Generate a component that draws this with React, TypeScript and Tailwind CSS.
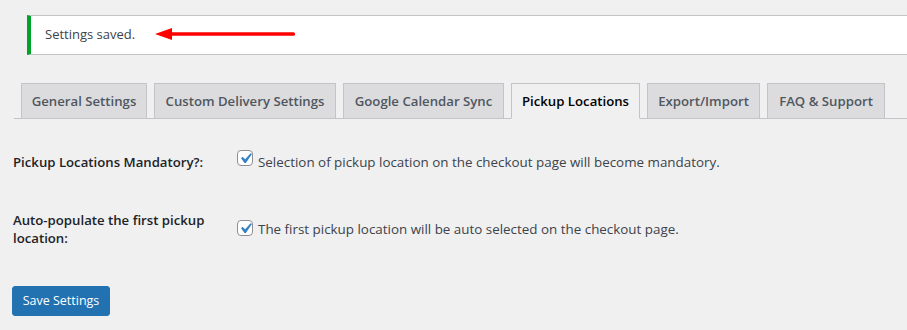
import React from 'react';

const tabs = [
  { label: 'General Settings', width: 'w-[126px]' },
  { label: 'Custom Delivery Settings', width: 'w-[182px]' },
  { label: 'Google Calendar Sync', width: 'w-[161px]' },
  { label: 'Pickup Locations', width: 'w-[129px]', active: true },
  { label: 'Export/Import', width: 'w-[113px]' },
  { label: 'FAQ & Support', width: 'w-[118px]' },
];

function Checkbox() {
  return (
    <span className="flex h-4 w-4 shrink-0 items-center justify-center rounded-[4px] border border-[#8c8f94] bg-white">
      <svg viewBox="0 0 20 20" className="h-[21px] w-[21px] shrink-0">
        <path fill="#3582c4" d="M14.83 4.89l1.34.94-5.81 8.38H9.02L5.78 9.67l1.34-1.25 2.57 2.4z" />
      </svg>
    </span>
  );
}

export default function App() {
  return (
    <div className="h-[330px] w-[907px] overflow-hidden bg-[#f0f0f1] pt-[15px] font-['Open_Sans',sans-serif] text-[#3c434a]">
      {/* notice */}
      <div className="ml-[27px] flex h-[40px] w-[900px] items-center border-y border-l-4 border-[#c3c4c7] border-l-[#00a32a] bg-white pl-[14px]">
        <p className="text-[13px]">Settings saved.</p>
        <svg width="141" height="14" viewBox="0 0 141 14" className="ml-[20px] -mt-[3px]">
          <polygon points="0,7 17,1 17,13" fill="#ff0000" />
          <rect x="14" y="5.3" width="126" height="3.4" rx="1.5" fill="#ff0000" />
        </svg>
      </div>

      {/* tabs */}
      <div className="mt-[28px] ml-[14px] flex gap-[7px] border-b border-[#c3c4c7] pl-[7px]">
        {tabs.map((t) => (
          <div
            key={t.label}
            className={`-mb-px flex h-[36px] items-center justify-center border border-[#c3c4c7] pt-px text-[13.2px] font-semibold ${t.width} ${
              t.active ? 'border-b-[#f0f0f1] bg-[#f0f0f1] text-black' : 'bg-[#dcdcde] text-[#50575e]'
            }`}
          >
            {t.label}
          </div>
        ))}
      </div>

      {/* form */}
      <div className="ml-[13px] text-[13.4px]">
        <div className="mt-[33px] flex items-start">
          <div className="w-[224px] text-[13.2px] font-semibold leading-[20px] text-[#1d2327]">Pickup Locations Mandatory?:</div>
          <div className="flex items-start">
            <span className="-mt-[2px]"><Checkbox /></span>
            <span className="ml-[5px] leading-[20px]">Selection of pickup location on the checkout page will become mandatory.</span>
          </div>
        </div>

        <div className="mt-[39px] flex items-center">
          <div className="w-[224px] pr-[20px] text-[13.2px] font-semibold leading-[18px] text-[#1d2327]">
            Auto-populate the first pickup location:
          </div>
          <div className="flex items-center">
            <span className="-mt-[2px]"><Checkbox /></span>
            <span className="ml-[5px] leading-[20px]">The first pickup location will be auto selected on the checkout page.</span>
          </div>
        </div>

        <button className="mt-[39px] -ml-px flex h-[30px] w-[98px] items-center justify-center rounded-[3px] border border-[#2271b1] bg-[#2271b1] text-[12.5px] text-white">
          Save Settings
        </button>
      </div>
    </div>
  );
}
